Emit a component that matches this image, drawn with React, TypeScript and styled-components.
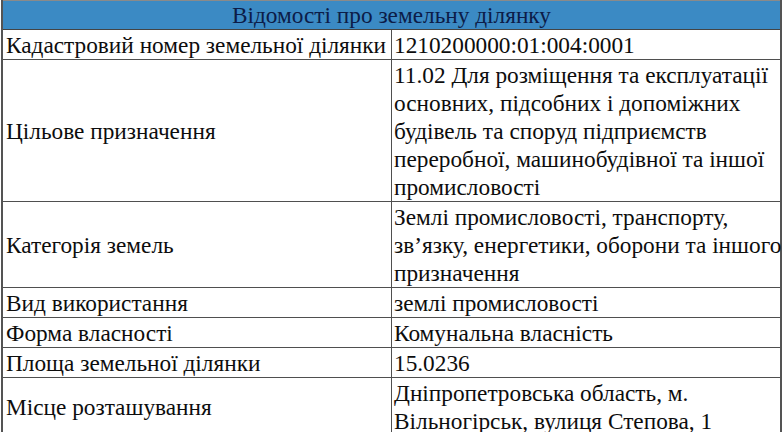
import styled, { createGlobalStyle } from "styled-components";

const GlobalStyle = createGlobalStyle`
    html, body {
        margin: 0;
        padding: 0;
        background: #ffffff;
    }
    body {
        font-family: "Liberation Serif", "Times New Roman", serif;
    }
`;

type Row = {
    label: string;
    value: string[];
};

const rows: Row[] = [
    { label: "Кадастровий номер земельної ділянки", value: ["1210200000:01:004:0001"] },
    {
        label: "Цільове призначення",
        value: [
            "11.02 Для розміщення та експлуатації",
            "основних, підсобних і допоміжних",
            "будівель та споруд підприємств",
            "переробної, машинобудівної та іншої",
            "промисловості",
        ],
    },
    {
        label: "Категорія земель",
        value: ["Землі промисловості, транспорту,", "зв’язку, енергетики, оборони та іншого", "призначення"],
    },
    { label: "Вид використання", value: ["землі промисловості"] },
    { label: "Форма власності", value: ["Комунальна власність"] },
    { label: "Площа земельної ділянки", value: ["15.0236"] },
    {
        label: "Місце розташування",
        value: ["Дніпропетровська область, м.", "Вільногірськ, вулиця Степова, 1"],
    },
];

const App = () => {
    return (
        <>
            <GlobalStyle />
            <Page>
                <InfoTable>
                    <thead>
                        <tr>
                            <HeadCell colSpan={2}>Відомості про земельну ділянку</HeadCell>
                        </tr>
                    </thead>
                    <tbody>
                        {rows.map((row) => (
                            <tr key={row.label}>
                                <LabelCell>{row.label}</LabelCell>
                                <ValueCell>
                                    {row.value.map((line) => (
                                        <Line key={line}>{line}</Line>
                                    ))}
                                </ValueCell>
                            </tr>
                        ))}
                    </tbody>
                </InfoTable>
            </Page>
        </>
    );
};

export default App;

const serif = `"Liberation Serif", "Times New Roman", "DejaVu Serif", serif`;

const Page = styled.div`
    width: 783px;
    height: 432px;
    overflow: hidden;
    padding: 0 1px;
    box-sizing: border-box;
    font-family: ${serif};
`;

const InfoTable = styled.table`
    width: 781px;
    border-collapse: collapse;
    table-layout: fixed;
    border: 2px solid #545454;
    border-top: 1px solid #8a8a8a;
    font-family: ${serif};
    font-size: 23.3px;
    line-height: 28px;
    color: #0d0d0d;
`;

const HeadCell = styled.th`
    height: 28px;
    padding: 0;
    background-color: #3b8ac4;
    color: #0c1c48;
    font-family: ${serif};
    font-weight: normal;
    text-align: center;
    border: 1px solid #444444;
    border-top: none;
`;

const LabelCell = styled.td`
    width: 388px;
    padding: 1px 3px 0;
    border: 1px solid #4f4f4f;
    font-family: ${serif};
    vertical-align: middle;
    white-space: nowrap;
`;

const ValueCell = styled.td`
    padding: 1px 2px 0;
    border: 1px solid #4f4f4f;
    font-family: ${serif};
    vertical-align: middle;
    white-space: nowrap;
`;

const Line = styled.span`
    display: block;
`;
